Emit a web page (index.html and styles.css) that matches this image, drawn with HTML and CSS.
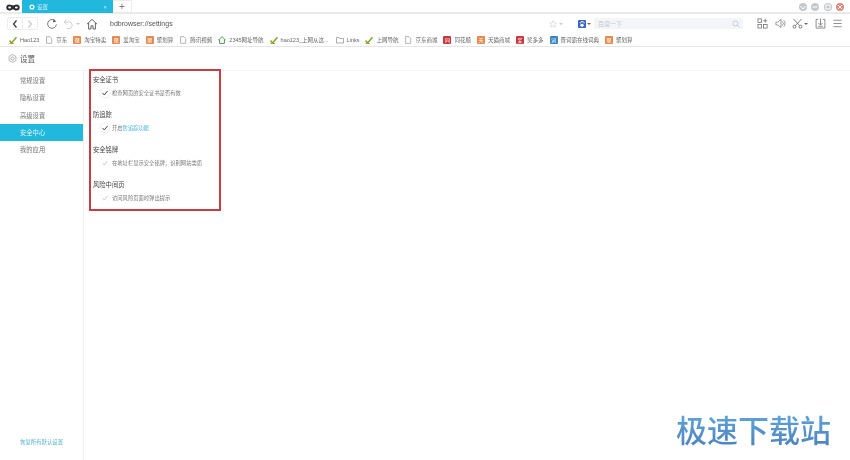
FILE: index.html
```html
<!DOCTYPE html>
<html lang="zh-CN">
<head>
<meta charset="utf-8">
<title>设置</title>
<link rel="stylesheet" href="styles.css">
</head>
<body>
<div class="tabbar">
  <svg class="logo" viewBox="0 0 14 7"><path d="M3.500 .5C5 .5 6 1.400 7 1.400S9 .5 10.500 .5C12.500 .5 13.700 1.800 13.700 3.500S12.400 6.600 10.600 6.600C8.800 6.600 8 5.200 7 5.200S5.200 6.600 3.400 6.600C1.600 6.600 .3 5.300 .3 3.500 .3 1.800 1.500 .5 3.500 .5ZM3.600 2.500C2.900 2.500 2.200 2.900 2.200 3.500S2.900 4.600 3.600 4.600 5.100 4.100 5.100 3.500 4.300 2.500 3.600 2.500ZM10.400 2.500C9.700 2.500 8.900 2.900 8.900 3.500S9.700 4.600 10.400 4.600 11.800 4.100 11.800 3.500 11.100 2.500 10.400 2.500Z" fill="#2a2a2e" fill-rule="evenodd"/></svg>
  <div class="tab">
    <svg class="tab-gear" viewBox="0 0 8 8"><circle cx="4" cy="4" r="2.600" fill="none" stroke="#fff" stroke-width="1.600"/></svg>
    <span class="tab-title">设置</span>
    <span class="tab-close">×</span>
  </div>
  <div class="tab-new">+</div>
  <div class="win-controls">
    <span class="win-btn"><svg viewBox="0 0 8 8"><path d="M1.500 3L4 6 6.500 3" fill="none" stroke="#fff" stroke-width="1"/></svg></span>
    <span class="win-btn"><svg viewBox="0 0 8 8"><path d="M1.500 4H6.500" stroke="#fff" stroke-width="1"/></svg></span>
    <span class="win-btn"><svg viewBox="0 0 8 8"><rect x="2" y="2" width="4" height="4" fill="none" stroke="#fff" stroke-width="1"/></svg></span>
    <span class="win-btn win-close"><svg viewBox="0 0 8 8"><path d="M2 2L6 6M6 2L2 6" stroke="#fff" stroke-width="1"/></svg></span>
  </div>
</div>

<div class="toolbar">
  <div class="nav-group">
    <span class="nav-btn"><svg viewBox="0 0 8 10"><path d="M5.500 1.500L2.500 5 5.500 8.500" fill="none" stroke="#333" stroke-width="1.200"/></svg></span>
    <span class="nav-btn"><svg viewBox="0 0 8 10"><path d="M2.500 1.500L5.500 5 2.500 8.500" fill="none" stroke="#ccc" stroke-width="1.200"/></svg></span>
  </div>
  <svg class="tool tool-reload" viewBox="0 0 12 12"><path d="M9.800 3.600A4.400 4.400 0 1 0 10.400 6.500" fill="none" stroke="#666" stroke-width=".9"/><path d="M7.700 .8L10 3.700 6.800 4.200Z" fill="#666"/></svg>
  <svg class="tool tool-undo" viewBox="0 0 12 12"><path d="M2.500 4H7A3 3 0 0 1 7 10.500H5" fill="none" stroke="#d0d0d0" stroke-width="1"/><path d="M4.700 1.500L2 4 4.700 6.500" fill="none" stroke="#d0d0d0" stroke-width="1"/></svg>
  <span class="caret caret-light"></span>
  <svg class="tool tool-home" viewBox="0 0 12 12"><path d="M1 6.200L6 1.300 11 6.200M2.600 5V11H5V7.800H7V11H9.400V5" fill="none" stroke="#555" stroke-width=".9"/></svg>
  <span class="url">bdbrowser://settings</span>
  <svg class="tool tool-star" viewBox="0 0 10 10"><path d="M5 .8L6.300 3.600 9.300 3.900 7 6 7.700 9 5 7.500 2.300 9 3 6 .7 3.900 3.700 3.600Z" fill="none" stroke="#c6c6c6" stroke-width=".7"/></svg>
  <span class="caret caret-light"></span>
  <div class="search">
    <svg class="search-logo" viewBox="0 0 9 9"><rect width="9" height="9" rx="1" fill="#3a64c8"/><ellipse cx="4.500" cy="5.800" rx="2" ry="1.700" fill="#fff"/><circle cx="2.500" cy="3.200" r=".8" fill="#fff"/><circle cx="4" cy="2" r=".8" fill="#fff"/><circle cx="5.500" cy="2" r=".8" fill="#fff"/><circle cx="6.800" cy="3.200" r=".8" fill="#fff"/></svg>
    <span class="caret caret-dark"></span>
    <div class="search-box">
      <span class="search-text">百度一下</span>
      <svg class="search-mag" viewBox="0 0 8 8"><circle cx="3.400" cy="3.400" r="2.500" fill="none" stroke="#c4c8cc" stroke-width=".9"/><path d="M5.200 5.200L7.400 7.400" stroke="#c4c8cc" stroke-width="1"/></svg>
    </div>
  </div>
  <div class="tools-right">
    <svg class="rt" viewBox="0 0 12 12"><g fill="none" stroke="#666" stroke-width=".8"><rect x="1" y="1" width="4" height="4"/><rect x="1" y="7" width="4" height="4"/><rect x="7" y="7" width="4" height="4"/><path d="M9 .8V5.200M6.800 3H11.200"/></g></svg>
    <svg class="rt" viewBox="0 0 12 12"><g fill="none" stroke="#777" stroke-width=".8"><path d="M1 4.500V7.500H3L6.500 10.500V1.500L3 4.500Z"/><path d="M8 3.800A3 3 0 0 1 8 8.200M9.500 2.500A5 5 0 0 1 9.500 9.500"/></g></svg>
    <span class="rt-group">
      <svg class="rt" viewBox="0 0 12 12"><g fill="none" stroke="#555" stroke-width=".8"><circle cx="2.700" cy="9.500" r="1.600"/><circle cx="9.300" cy="9.500" r="1.600"/><path d="M3.700 8.300L10.500 1M8.300 8.300L1.500 1"/></g></svg>
      <span class="caret caret-dark"></span>
    </span>
    <svg class="rt" viewBox="0 0 12 12"><g fill="none" stroke="#666" stroke-width=".8"><path d="M3.500 1.500H1.200V11H10.800V1.500H8.500"/><path d="M6 .5V7.500M3.700 5.300L6 7.700 8.300 5.300M3.500 9H8.500"/></g></svg>
    <svg class="rt" viewBox="0 0 12 12"><path d="M1.500 2.500H10.500M1.500 6H10.500M1.500 9.500H10.500" stroke="#888" stroke-width="1"/></svg>
  </div>
</div>

<div class="bookmarks">
  <span class="bm"><svg class="bi" viewBox="0 0 8 8"><path d="M.5 4.500L2.500 7 7.500 1.200" fill="none" stroke="#7aa62c" stroke-width="1.500"/><path d="M.5 7.500H5" stroke="#e08a2a" stroke-width="1"/></svg>Hao123</span>
  <span class="bm"><svg class="bi" viewBox="0 0 8 8"><path d="M1.500.7H5L6.700 2.400V7.300H1.500Z" fill="none" stroke="#888" stroke-width=".6"/></svg>京东</span>
  <span class="bm"><span class="bi bi-orange">聚</span>淘宝特卖</span>
  <span class="bm"><span class="bi bi-orange">聚</span>爱淘宝</span>
  <span class="bm"><span class="bi bi-orange">聚</span>聚划算</span>
  <span class="bm"><svg class="bi" viewBox="0 0 8 8"><path d="M1.500.7H5L6.700 2.400V7.300H1.500Z" fill="none" stroke="#888" stroke-width=".6"/></svg>腾讯视频</span>
  <span class="bm"><svg class="bi" viewBox="0 0 8 8"><path d="M4 .6L7.400 4H6.400V7.400H1.600V4H.6Z" fill="none" stroke="#4f9a55" stroke-width="1"/></svg>2345网址导航</span>
  <span class="bm"><svg class="bi" viewBox="0 0 8 8"><path d="M.5 4.500L2.500 7 7.500 1.200" fill="none" stroke="#7aa62c" stroke-width="1.500"/><path d="M.5 7.500H5" stroke="#e08a2a" stroke-width="1"/></svg>hao123_上网从这...</span>
  <span class="bm bm-wide"><svg class="bi" viewBox="0 0 8 8"><path d="M.5 1.500H3L3.700 2.500H7.500V7H.5Z" fill="none" stroke="#777" stroke-width=".6"/></svg>Links</span>
  <span class="bm"><svg class="bi" viewBox="0 0 8 8"><path d="M.5 4.500L2.500 7 7.500 1.200" fill="none" stroke="#7aa62c" stroke-width="1.500"/><path d="M.5 7.500H5" stroke="#e08a2a" stroke-width="1"/></svg>上网导航</span>
  <span class="bm"><svg class="bi" viewBox="0 0 8 8"><path d="M1.500.7H5L6.700 2.400V7.300H1.500Z" fill="none" stroke="#888" stroke-width=".6"/></svg>京东商城</span>
  <span class="bm"><span class="bi bi-red">同</span>同花顺</span>
  <span class="bm"><span class="bi bi-orange bi-round">天</span>天猫商城</span>
  <span class="bm"><span class="bi bi-red">奖</span>奖多多</span>
  <span class="bm"><span class="bi bi-blue">词</span>晋词霸在线词典</span>
  <span class="bm"><span class="bi bi-orange">聚</span>聚划算</span>
</div>

<header class="page-head">
  <svg class="head-gear" viewBox="0 0 10 10"><path d="M5 .6L8.800 2.800V7.200L5 9.400 1.200 7.200V2.800Z" fill="none" stroke="#777" stroke-width=".6"/><circle cx="5" cy="5" r="1.800" fill="none" stroke="#777" stroke-width=".6"/></svg>
  <span class="head-title">设置</span>
</header>

<div class="layout">
  <nav class="sidebar">
    <a class="nav-item">常规设置</a>
    <a class="nav-item">隐私设置</a>
    <a class="nav-item">高级设置</a>
    <a class="nav-item nav-active">安全中心</a>
    <a class="nav-item">我的应用</a>
    <a class="restore">恢复所有默认设置</a>
  </nav>
  <main class="main">
    <div class="annotation"></div>
    <section class="group">
      <h2 class="group-title">安全证书</h2>
      <div class="row"><span class="check"><svg viewBox="0 0 8 8"><path d="M1.500 4L3.300 6 6.500 2" fill="none" stroke="#444" stroke-width="1"/></svg></span><span class="label">检查网页的安全证书是否有效</span></div>
    </section>
    <section class="group">
      <h2 class="group-title">防追踪</h2>
      <div class="row"><span class="check"><svg viewBox="0 0 8 8"><path d="M1.500 4L3.300 6 6.500 2" fill="none" stroke="#444" stroke-width="1"/></svg></span><span class="label">开启<span class="link">防追踪功能</span></span></div>
    </section>
    <section class="group">
      <h2 class="group-title">安全铭牌</h2>
      <div class="row"><span class="check check-off"><svg viewBox="0 0 8 8"><path d="M1.500 4L3.300 6 6.500 2" fill="none" stroke="#ccc" stroke-width="1"/></svg></span><span class="label">在地址栏显示安全铭牌，识别网站类质</span></div>
    </section>
    <section class="group">
      <h2 class="group-title">风险中间页</h2>
      <div class="row"><span class="check check-off"><svg viewBox="0 0 8 8"><path d="M1.500 4L3.300 6 6.500 2" fill="none" stroke="#ccc" stroke-width="1"/></svg></span><span class="label">访问风险页面时弹出提示</span></div>
    </section>
  </main>
</div>
<div class="watermark">极速下载站</div>
</body>
</html>
```

FILE: styles.css
```css
* { box-sizing: border-box; }
html, body { margin: 0; height: 100%; }
body {
  width: 850px;
  height: 460px;
  overflow: hidden;
  background: #fff;
  color: #666;
  font-family: "Liberation Sans", "Noto Sans CJK SC", sans-serif;
  font-size: 6px;
  display: flex;
  flex-direction: column;
  position: relative;
}
svg { display: block; flex: none; }

/* The reference is a soft, downscaled capture */
.tabbar, .toolbar, .bookmarks, .page-head, .layout { filter: blur(.3px); }

.tabbar {
  height: 14px;
  display: flex;
  align-items: stretch;
  background: #fff;
  border-bottom: 2px solid #eaeaea;
  flex: none;
}
.logo { width: 14px; height: 7px; margin: 4px 0 0 6px; }
.tab {
  width: 91px;
  height: 13px;
  margin-left: 2px;
  background: #22b7dd;
  color: #d8f3fa;
  display: flex;
  align-items: center;
  padding: 0 6px;
}
.tab-gear { width: 6px; height: 6px; margin-left: 1px; }
.tab-title { margin-left: 2px; font-size: 5.500px; }
.tab-close { margin-left: auto; margin-right: 0; font-size: 6px; color: #cdeef7; }
.tab-new {
  width: 19px;
  height: 13px;
  border: 1px solid #ececec;
  border-width: 1px 1px 0 0;
  color: #777;
  font-size: 10px;
  line-height: 12px;
  text-align: center;
}
.win-controls {
  margin-left: auto;
  margin-right: 6px;
  display: flex;
  gap: 4.500px;
  align-items: center;
  height: 13px;
}
.win-btn {
  width: 8px;
  height: 8px;
  border-radius: 50%;
  background: #c3c8cc;
}
.win-close { background: #e8877d; }

.toolbar {
  height: 19px;
  display: flex;
  align-items: center;
  padding-left: 7px;
  flex: none;
}
.nav-group {
  display: flex;
  width: 31px;
  height: 13px;
  border: 1px solid #ededed;
  border-radius: 2px;
}
.nav-btn { flex: 1; display: flex; align-items: center; justify-content: center; }
.nav-btn:first-child { border-right: 1px solid #ededed; }
.nav-btn svg { width: 8px; height: 10px; }
.tool { width: 12px; height: 12px; }
.tool-reload { margin-left: 8px; }
.tool-undo { margin-left: 4px; }
.tool-home { margin-left: 6px; }
.caret {
  width: 0;
  height: 0;
  border: 2px solid transparent;
  border-bottom-width: 0;
  flex: none;
}
.caret-light { border-top-color: #c8c8c8; margin-left: 2px; }
.caret-dark { border-top-color: #667; margin-left: 1px; }
.url { margin-left: 12px; width: 439px; font-size: 7px; color: #555; white-space: nowrap; }
.tool-star { width: 8px; height: 8px; }
.search { display: flex; align-items: center; margin-left: 15px; }
.search-logo { width: 8px; height: 8px; }
.search-box {
  width: 149px;
  height: 11px;
  margin-left: 3px;
  background: #f3f5f8;
  display: flex;
  align-items: center;
  padding: 0 3px 0 4px;
  color: #c5cad0;
}
.search-text { font-size: 6px; }
.search-mag { width: 8px; height: 8px; margin-left: auto; }
.tools-right { display: flex; align-items: center; margin-left: 14px; gap: 6.500px; }
.rt { width: 11px; height: 11px; }
.rt-group { display: flex; align-items: center; }

.bookmarks {
  height: 14px;
  display: flex;
  align-items: center;
  gap: 6px;
  padding-left: 9px;
  border-bottom: 1px solid #e6e6e6;
  font-size: 5.500px;
  color: #666;
  white-space: nowrap;
  flex: none;
}
.bm { display: flex; align-items: center; gap: 3px; }
.bm-wide { margin-left: 1px; }
.bi { width: 8px; height: 8px; flex: none; }
span.bi {
  border-radius: 1px;
  color: #fff;
  font-size: 5px;
  line-height: 8px;
  text-align: center;
  overflow: hidden;
}
.bi-orange { background: #e58a4e; }
.bi-round { border-radius: 50%; }
.bi-red { background: #c7373f; }
.bi-blue { background: #3c86c0; }

.page-head {
  height: 24px;
  display: flex;
  align-items: center;
  padding-left: 8px;
  border-bottom: 1px solid #f4f4f4;
  flex: none;
}
.head-gear { width: 9px; height: 9px; }
.head-title { margin-left: 3px; font-size: 7.500px; color: #555; }

.layout { flex: 1; display: flex; min-height: 0; }
.sidebar {
  width: 84px;
  border-right: 1px solid #f0f0f0;
  display: flex;
  flex-direction: column;
  padding-top: 1px;
  padding-bottom: 14px;
  flex: none;
}
.nav-item {
  height: 17.300px;
  line-height: 17.300px;
  padding-left: 20px;
  font-size: 6.300px;
  color: #777;
}
.nav-active { background: #20b8dd; color: #e4f7fb; }
.restore { margin-top: auto; padding-left: 20px; font-size: 5.400px; color: #59b3cc; }

.main { position: relative; flex: 1; padding: 1px 0 0 9px; }
.annotation {
  position: absolute;
  left: 5px;
  top: -2px;
  width: 132px;
  height: 142px;
  border: 2px solid #c93c44;
}
.group { height: 35px; }
.group-title { margin: 0; height: 14px; padding-top: 1px; line-height: 14px; font-size: 6.300px; font-weight: 400; color: #444; }
.row { height: 14px; display: flex; align-items: center; padding-left: 8px; }
.check {
  width: 8px;
  height: 8px;
  background: #fff;
  border-radius: 2px;
  box-shadow: 0 0 2px #ccc;
}
.check svg { width: 8px; height: 8px; }
.check-off { box-shadow: 0 0 1px #e4e4e4; }
.label { margin-left: 3px; font-size: 5.300px; color: #777; white-space: nowrap; }
.link { color: #3fb3d3; }

.watermark {
  position: absolute;
  left: 676px;
  top: 408px;
  font-family: "Noto Sans CJK SC", sans-serif;
  font-size: 31px;
  font-weight: 500;
  line-height: 42px;
  white-space: nowrap;
  background: linear-gradient(#63aade, #4a7fbc);
  -webkit-background-clip: text;
  background-clip: text;
  color: transparent;
}
```
